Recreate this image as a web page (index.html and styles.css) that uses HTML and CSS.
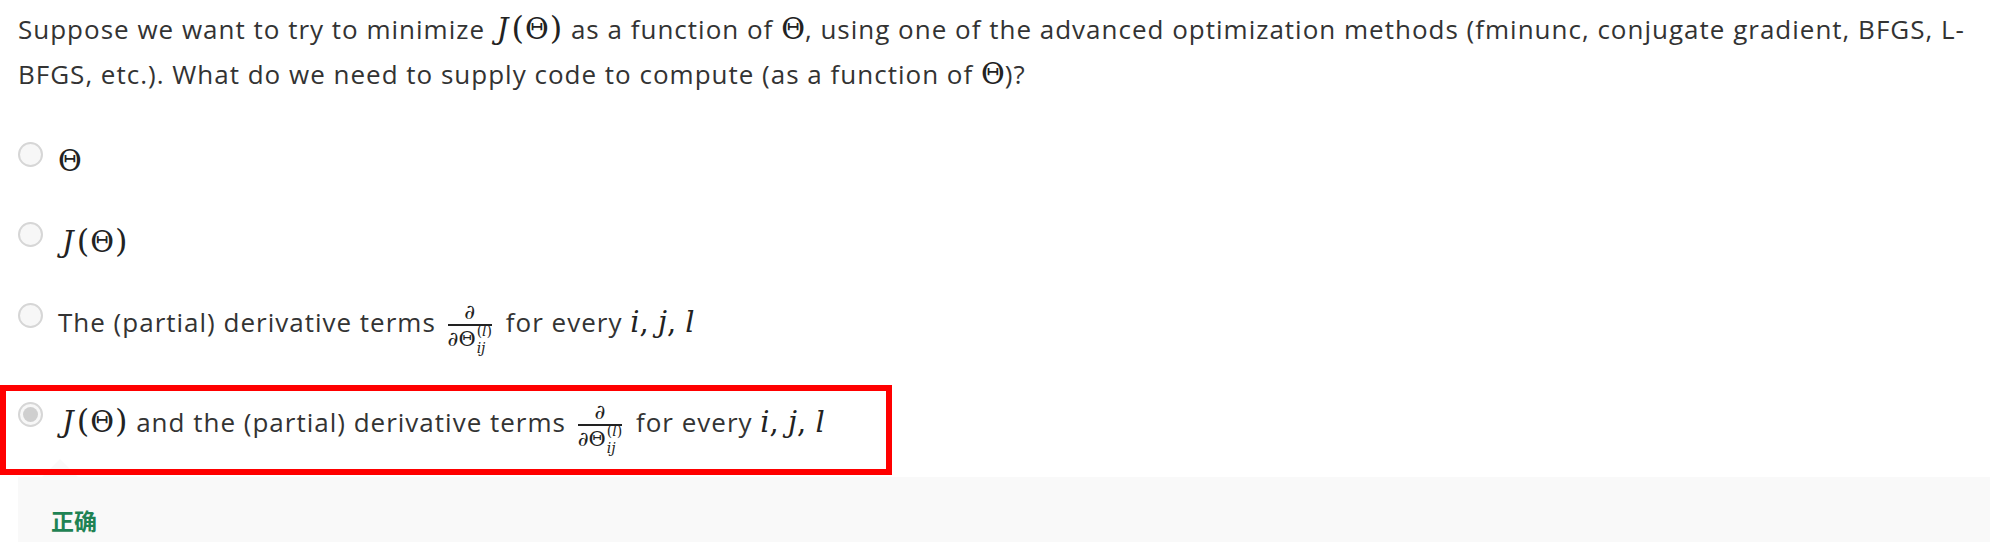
FILE: index.html
```html
<!DOCTYPE html>
<html lang="en">
<head>
<meta charset="utf-8">
<title>Quiz question</title>
<link rel="stylesheet" href="styles.css">
</head>
<body>
<div class="page">
  <p class="question">Suppose we want to try to minimize <span class="math jt"><i class="j">J</i><span class="paren">(</span>Θ<span class="paren">)</span></span> as a function of <span class="math">Θ</span>, using one of the advanced optimization methods (fminunc, conjugate gradient, BFGS, L-BFGS, etc.). What do we need to supply code to compute (as a function of <span class="math">Θ</span>)?</p>

  <div class="options">
    <div class="option">
      <span class="radio"></span>
      <div class="label"><span class="math">Θ</span></div>
    </div>
    <div class="option">
      <span class="radio"></span>
      <div class="label"><span class="math jt"><i class="j">J</i><span class="paren">(</span>Θ<span class="paren">)</span></span></div>
    </div>
    <div class="option">
      <span class="radio"></span>
      <div class="label">The (partial) derivative terms <span class="frac"><span class="num"><i>∂</i></span><span class="den"><i>∂</i>Θ<span class="supsub"><span class="sup">(<i>l</i>)</span><span class="sub"><i>ij</i></span></span></span></span> for every <span class="math"><i>i</i>, <i>j</i>, <i>l</i></span></div>
    </div>
    <div class="option selected">
      <span class="radio"><span class="dot"></span></span>
      <div class="label"><span class="math jt"><i class="j">J</i><span class="paren">(</span>Θ<span class="paren">)</span></span> and the (partial) derivative terms <span class="frac"><span class="num"><i>∂</i></span><span class="den"><i>∂</i>Θ<span class="supsub"><span class="sup">(<i>l</i>)</span><span class="sub"><i>ij</i></span></span></span></span> for every <span class="math"><i>i</i>, <i>j</i>, <i>l</i></span></div>
      <span class="highlight"></span>
    </div>
  </div>

  <div class="feedback">
    <span class="arrow"></span>
    <div class="verdict">正确</div>
  </div>
</div>
</body>
</html>
```

FILE: styles.css
```css
html, body {
  margin: 0;
  padding: 0;
  background: #ffffff;
}

body {
  font-family: "Open Sans", "Noto Sans CJK SC", sans-serif;
  font-size: 26px;
  line-height: 45px;
  letter-spacing: 1px;
  color: #333333;
}

.page {
  padding: 6px 0 0 18px;
}

.question {
  margin: 0;
  padding-right: 8px;
}

.math {
  font-family: "DejaVu Serif", "Liberation Serif", serif;
  font-size: 29px;
  letter-spacing: 0;
  color: #222222;
}

.math i, .frac i {
  font-style: italic;
}

.jt .j {
  margin-left: 4px;
  margin-right: 2px;
}

.jt .paren {
  font-size: 32px;
  margin: 0 1px;
}

.options {
  margin-top: 42px;
  display: flex;
  flex-direction: column;
  gap: 35px;
}

.option {
  position: relative;
  display: flex;
  align-items: flex-start;
  gap: 15px;
}

.option.selected {
  margin-top: 9px;
}

.radio {
  flex: none;
  width: 21px;
  height: 21px;
  margin-top: 3px;
  border: 2px solid #d6d6d6;
  border-radius: 50%;
  background: #f7f7f7;
  display: flex;
  align-items: center;
  justify-content: center;
}

.dot {
  width: 15px;
  height: 15px;
  border-radius: 50%;
  background: #cfcfcf;
}

.label {
  min-height: 45px;
}

.frac {
  display: inline-flex;
  flex-direction: column;
  align-items: center;
  vertical-align: 13px;
  font-family: "DejaVu Serif", "Liberation Serif", serif;
  line-height: 1;
  letter-spacing: 0;
  color: #222222;
  margin: 0 6px 0 4px;
}

.num {
  font-size: 21px;
  padding: 0 2px 1px;
  border-bottom: 2px solid #222222;
  align-self: stretch;
  text-align: center;
}

.den {
  display: inline-flex;
  align-items: flex-start;
  font-size: 21px;
  padding-top: 3px;
}

.supsub {
  display: inline-flex;
  flex-direction: column;
  font-size: 14px;
  line-height: 1;
  margin-left: 1px;
  margin-top: -5px;
}

.sub {
  margin-top: 3px;
}

.highlight {
  position: absolute;
  z-index: 2;
  left: -18px;
  top: -14px;
  width: 880px;
  height: 78px;
  border: 6px solid #ff0000;
  pointer-events: none;
}

.feedback {
  position: relative;
  margin-top: 22px;
  background: #f9f9f9;
  padding: 28px 0 20px 33px;
}

.arrow {
  position: absolute;
  left: 24px;
  top: -18px;
  width: 0;
  height: 0;
  border-left: 18px solid transparent;
  border-right: 18px solid transparent;
  border-bottom: 18px solid #f9f9f9;
}

.verdict {
  font-family: "Noto Sans CJK SC", sans-serif;
  font-size: 23px;
  line-height: 30px;
  font-weight: 700;
  letter-spacing: 0;
  color: #1f8354;
}
```
